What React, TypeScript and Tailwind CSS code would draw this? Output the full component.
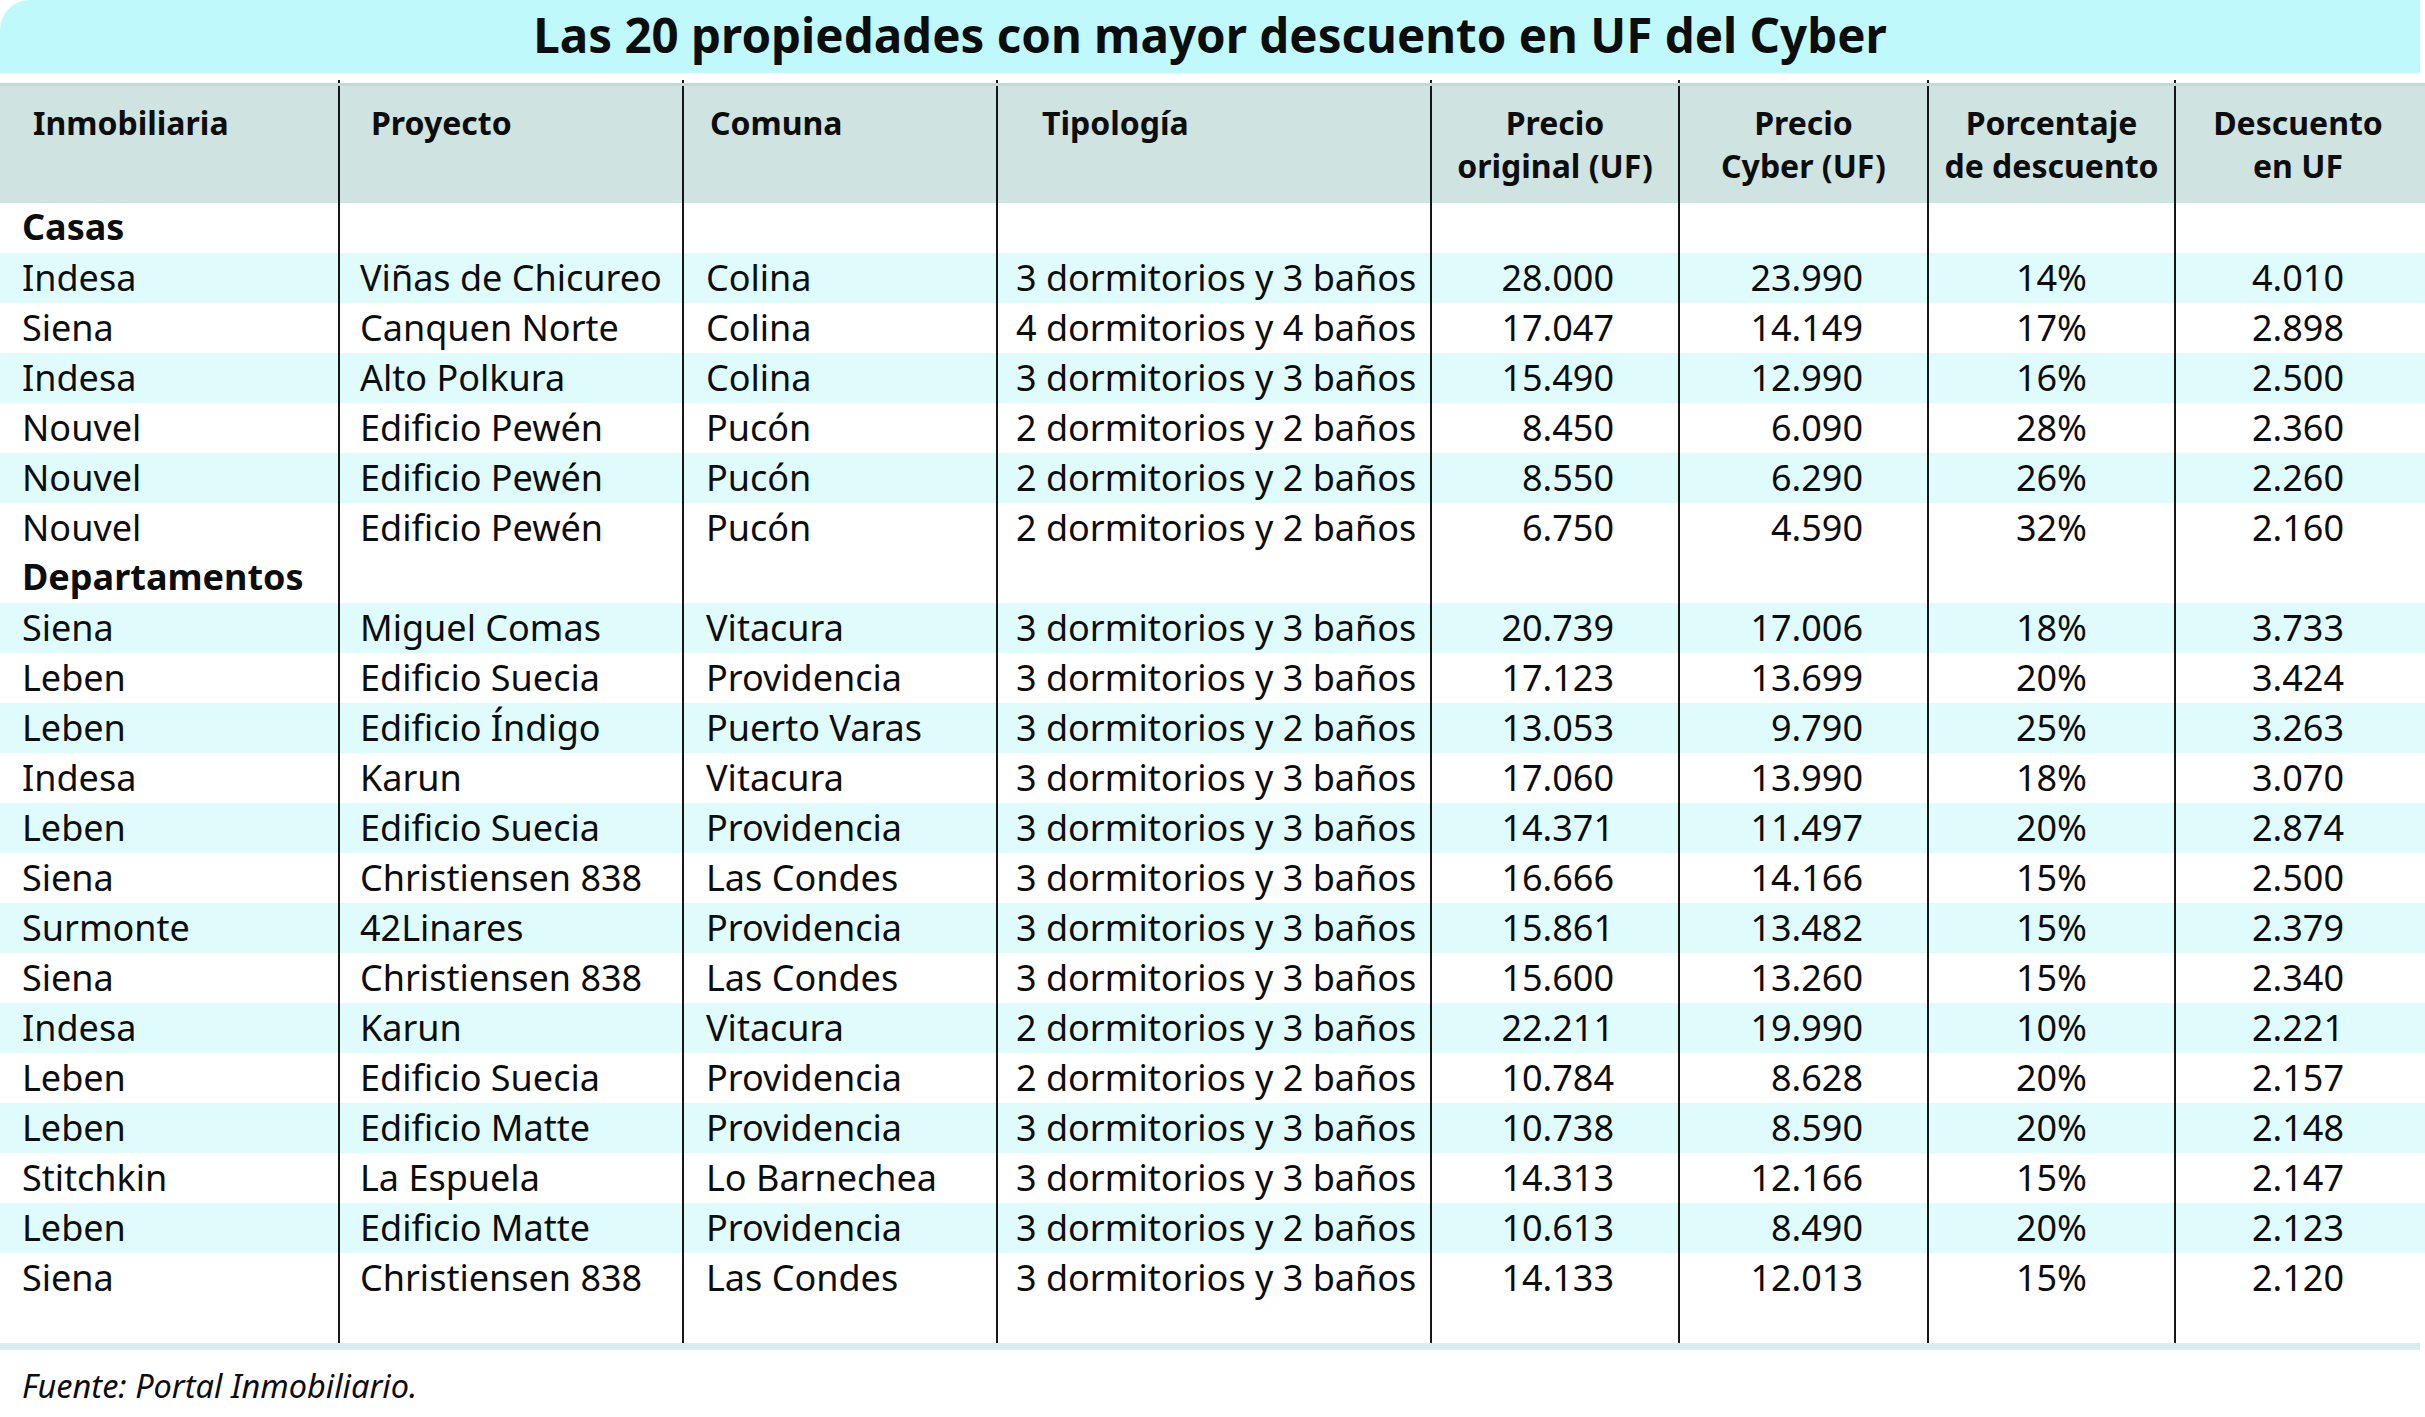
import React from "react";

type Row = {
  inmo: string;
  proyecto: string;
  comuna: string;
  tipo: string;
  original: string;
  cyber: string;
  pct: string;
  desc: string;
};

const casas: Row[] = [
  { inmo: "Indesa", proyecto: "Viñas de Chicureo", comuna: "Colina", tipo: "3 dormitorios y 3 baños", original: "28.000", cyber: "23.990", pct: "14%", desc: "4.010" },
  { inmo: "Siena", proyecto: "Canquen Norte", comuna: "Colina", tipo: "4 dormitorios y 4 baños", original: "17.047", cyber: "14.149", pct: "17%", desc: "2.898" },
  { inmo: "Indesa", proyecto: "Alto Polkura", comuna: "Colina", tipo: "3 dormitorios y 3 baños", original: "15.490", cyber: "12.990", pct: "16%", desc: "2.500" },
  { inmo: "Nouvel", proyecto: "Edificio Pewén", comuna: "Pucón", tipo: "2 dormitorios y 2 baños", original: "8.450", cyber: "6.090", pct: "28%", desc: "2.360" },
  { inmo: "Nouvel", proyecto: "Edificio Pewén", comuna: "Pucón", tipo: "2 dormitorios y 2 baños", original: "8.550", cyber: "6.290", pct: "26%", desc: "2.260" },
  { inmo: "Nouvel", proyecto: "Edificio Pewén", comuna: "Pucón", tipo: "2 dormitorios y 2 baños", original: "6.750", cyber: "4.590", pct: "32%", desc: "2.160" },
];

const deptos: Row[] = [
  { inmo: "Siena", proyecto: "Miguel Comas", comuna: "Vitacura", tipo: "3 dormitorios y 3 baños", original: "20.739", cyber: "17.006", pct: "18%", desc: "3.733" },
  { inmo: "Leben", proyecto: "Edificio Suecia", comuna: "Providencia", tipo: "3 dormitorios y 3 baños", original: "17.123", cyber: "13.699", pct: "20%", desc: "3.424" },
  { inmo: "Leben", proyecto: "Edificio Índigo", comuna: "Puerto Varas", tipo: "3 dormitorios y 2 baños", original: "13.053", cyber: "9.790", pct: "25%", desc: "3.263" },
  { inmo: "Indesa", proyecto: "Karun", comuna: "Vitacura", tipo: "3 dormitorios y 3 baños", original: "17.060", cyber: "13.990", pct: "18%", desc: "3.070" },
  { inmo: "Leben", proyecto: "Edificio Suecia", comuna: "Providencia", tipo: "3 dormitorios y 3 baños", original: "14.371", cyber: "11.497", pct: "20%", desc: "2.874" },
  { inmo: "Siena", proyecto: "Christiensen 838", comuna: "Las Condes", tipo: "3 dormitorios y 3 baños", original: "16.666", cyber: "14.166", pct: "15%", desc: "2.500" },
  { inmo: "Surmonte", proyecto: "42Linares", comuna: "Providencia", tipo: "3 dormitorios y 3 baños", original: "15.861", cyber: "13.482", pct: "15%", desc: "2.379" },
  { inmo: "Siena", proyecto: "Christiensen 838", comuna: "Las Condes", tipo: "3 dormitorios y 3 baños", original: "15.600", cyber: "13.260", pct: "15%", desc: "2.340" },
  { inmo: "Indesa", proyecto: "Karun", comuna: "Vitacura", tipo: "2 dormitorios y 3 baños", original: "22.211", cyber: "19.990", pct: "10%", desc: "2.221" },
  { inmo: "Leben", proyecto: "Edificio Suecia", comuna: "Providencia", tipo: "2 dormitorios y 2 baños", original: "10.784", cyber: "8.628", pct: "20%", desc: "2.157" },
  { inmo: "Leben", proyecto: "Edificio Matte", comuna: "Providencia", tipo: "3 dormitorios y 3 baños", original: "10.738", cyber: "8.590", pct: "20%", desc: "2.148" },
  { inmo: "Stitchkin", proyecto: "La Espuela", comuna: "Lo Barnechea", tipo: "3 dormitorios y 3 baños", original: "14.313", cyber: "12.166", pct: "15%", desc: "2.147" },
  { inmo: "Leben", proyecto: "Edificio Matte", comuna: "Providencia", tipo: "3 dormitorios y 2 baños", original: "10.613", cyber: "8.490", pct: "20%", desc: "2.123" },
  { inmo: "Siena", proyecto: "Christiensen 838", comuna: "Las Condes", tipo: "3 dormitorios y 3 baños", original: "14.133", cyber: "12.013", pct: "15%", desc: "2.120" },
];

const cols = "grid grid-cols-[340px_344px_314px_434px_248px_249px_247px_254px]";
const line = "border-r-2 border-[#161616]";

function DataRow({ r, shaded }: { r: Row; shaded: boolean }) {
  return (
    <div className={`${cols} h-[50px] text-[36px] leading-none ${shaded ? "bg-[#e0fbfc]" : "bg-white"}`}>
      <div className={`${line} flex items-center pl-[22px]`}>{r.inmo}</div>
      <div className={`${line} flex items-center pl-[20px] whitespace-nowrap`}>{r.proyecto}</div>
      <div className={`${line} flex items-center pl-[22px] whitespace-nowrap`}>{r.comuna}</div>
      <div className={`${line} flex items-center pl-[18px] whitespace-nowrap`}>{r.tipo}</div>
      <div className={`${line} flex items-center justify-end pr-[64px]`}>{r.original}</div>
      <div className={`${line} flex items-center justify-end pr-[64px]`}>{r.cyber}</div>
      <div className={`${line} flex items-center justify-center`}>{r.pct}</div>
      <div className="flex items-center justify-center pr-[10px]">{r.desc}</div>
    </div>
  );
}

function Lines({ h }: { h: string }) {
  return (
    <div className={`${cols} ${h} bg-white`}>
      <div className={line} />
      <div className={line} />
      <div className={line} />
      <div className={line} />
      <div className={line} />
      <div className={line} />
      <div className={line} />
      <div />
    </div>
  );
}

function GroupRow({ label }: { label: string }) {
  return (
    <div className={`${cols} h-[50px] text-[36px] leading-none bg-white`}>
      <div className={`${line} flex items-center pl-[22px] pb-[2px] font-bold whitespace-nowrap`}>{label}</div>
      <div className={line} />
      <div className={line} />
      <div className={line} />
      <div className={line} />
      <div className={line} />
      <div className={line} />
      <div />
    </div>
  );
}

export default function App() {
  return (
    <div className="w-[2425px] h-[1417px] bg-white text-[#0d0d0d] font-['Noto_Sans',sans-serif] overflow-hidden">
      <div className="w-[2420px] h-[73px] bg-[#bff9fc] rounded-tl-[30px] flex items-center justify-center pb-[4px]">
        <h1 className="text-[47.5px] font-bold">
          Las 20 propiedades con mayor descuento en UF del Cyber
        </h1>
      </div>
      <div className="h-[7px]" />
      <Lines h="h-[3px]" />

      {/* header */}
      <div className={`${cols} h-[120px] bg-[#cfe3e0] border-t-[3px] border-[#c4d9d6] text-[32px] font-bold leading-[43px]`}>
        <div className={`${line} pl-[33px] pt-[15px]`}>Inmobiliaria</div>
        <div className={`${line} pl-[31px] pt-[15px]`}>Proyecto</div>
        <div className={`${line} pl-[26px] pt-[15px]`}>Comuna</div>
        <div className={`${line} pl-[44px] pt-[15px]`}>Tipología</div>
        <div className={`${line} pt-[15px] text-center`}>Precio<br />original (UF)</div>
        <div className={`${line} pt-[15px] text-center`}>Precio<br />Cyber (UF)</div>
        <div className={`${line} pt-[15px] text-center whitespace-nowrap`}>Porcentaje<br />de descuento</div>
        <div className="pt-[15px] text-center pr-[10px]">Descuento<br />en UF</div>
      </div>

      <GroupRow label="Casas" />
      {casas.map((r, i) => (
        <DataRow key={"c" + i} r={r} shaded={i % 2 === 0} />
      ))}
      <GroupRow label="Departamentos" />
      {deptos.map((r, i) => (
        <DataRow key={"d" + i} r={r} shaded={i % 2 === 0} />
      ))}
      <Lines h="h-[40px]" />
      <div className="w-[2420px] h-[7px] bg-[#d6eeee]" />

      <p className="pl-[22px] pt-[20px] text-[32.5px] italic leading-none">
        Fuente: Portal Inmobiliario.
      </p>
    </div>
  );
}
